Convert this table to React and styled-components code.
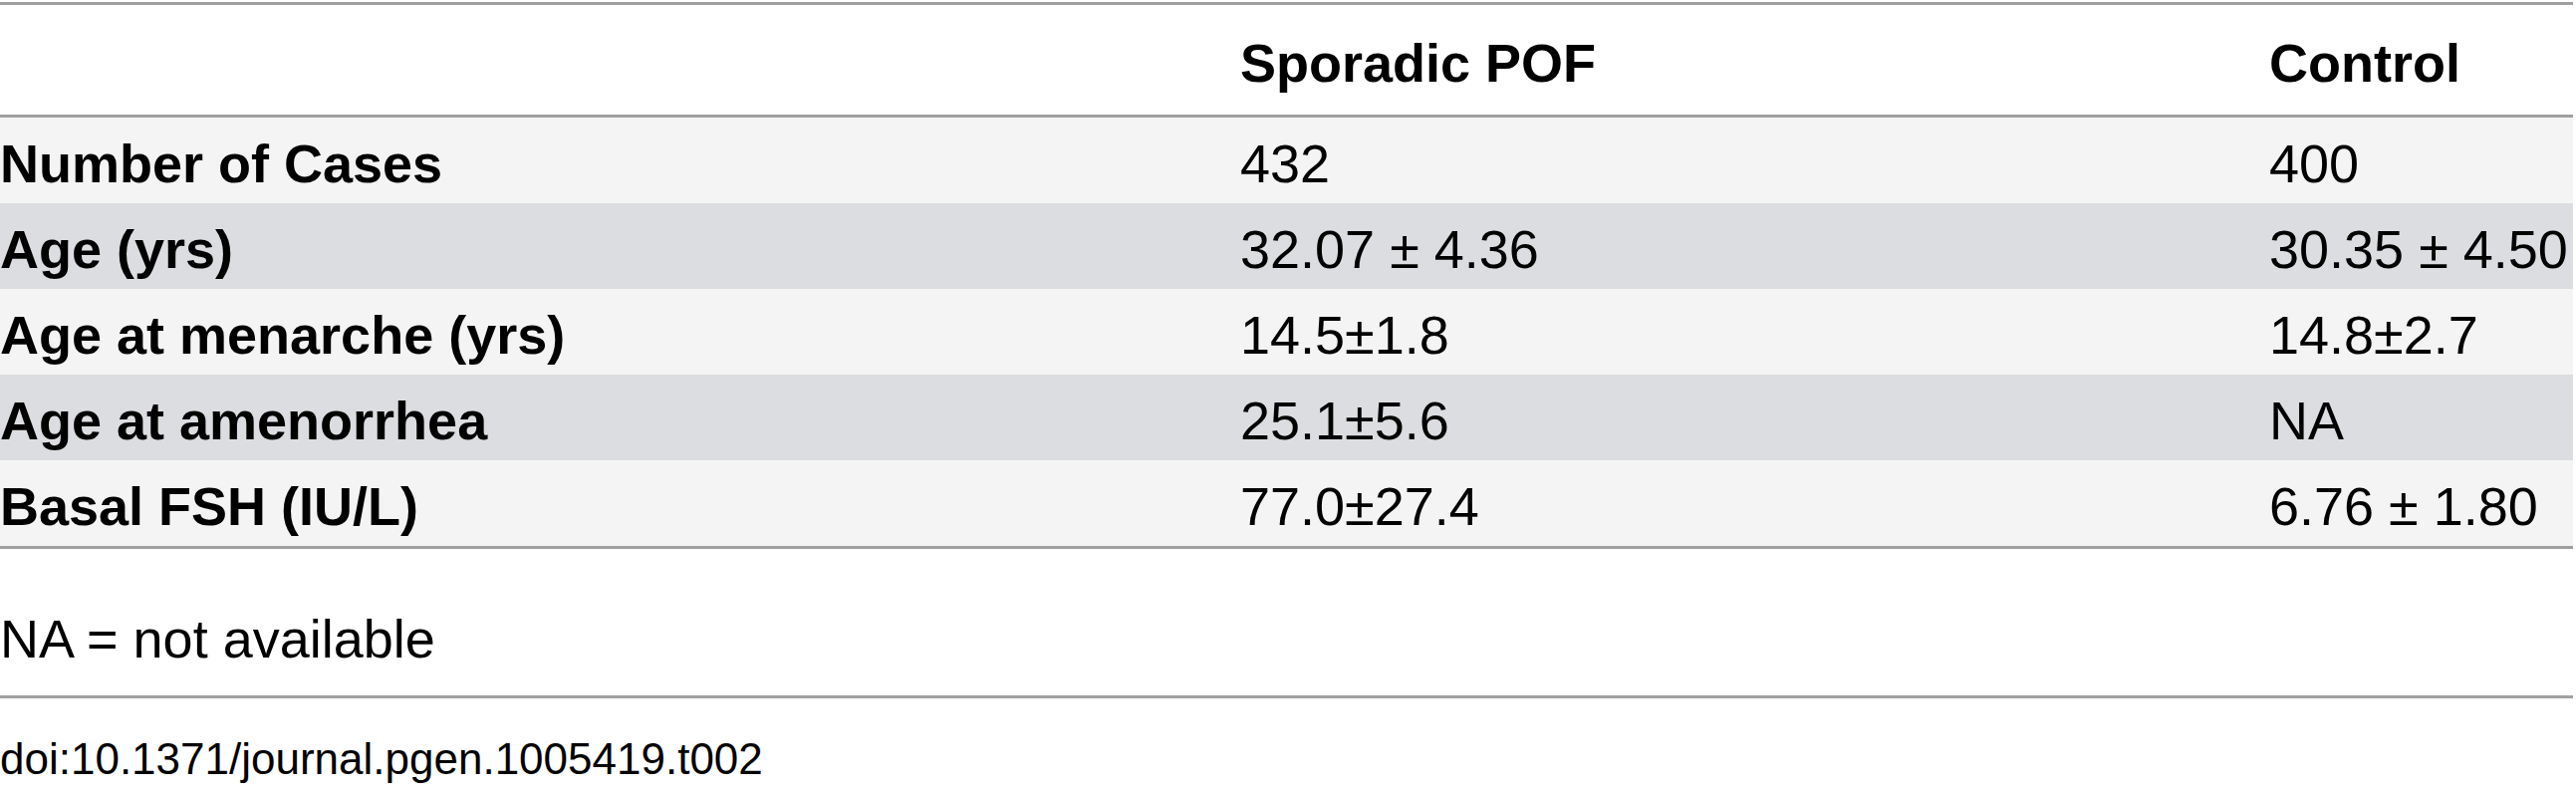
import React from "react";
import styled, { createGlobalStyle } from "styled-components";

const GlobalStyle = createGlobalStyle`
  html, body {
    margin: 0;
    padding: 0;
    background: #ffffff;
  }
  body {
    font-family: "Liberation Sans", Arial, sans-serif;
    color: #000;
  }
`;

const Page = styled.div`
  width: 2583px;
  padding-top: 2px;
`;

const Table = styled.div`
  border-top: 3px solid #a0a0a0;
  border-bottom: 3px solid #a0a0a0;
`;

// header row carries its own 3px rule, so it's 110 + 3
const Row = styled.div`
  display: grid;
  grid-template-columns: 1245px 1033px 1fr;
  box-sizing: border-box;
  height: ${(p) => (p.$header ? "113px" : "86px")};
  padding-top: ${(p) => (p.$header ? "28px" : "16px")};
  background: ${(p) =>
    p.$header ? "#ffffff" : p.$shade ? "#dcdde0" : "#f4f4f4"};
  border-bottom: ${(p) => (p.$header ? "3px solid #a0a0a0" : "none")};
`;

const Cell = styled.div`
  font-size: 54px;
  line-height: 60px;
  font-weight: ${(p) => (p.$bold ? 700 : 400)};
  white-space: nowrap;
`;

const Footnote = styled.div`
  font-size: 54px;
  line-height: 60px;
  padding: 60px 0 27px;
  border-bottom: 3px solid #a0a0a0;
`;

const Doi = styled.div`
  font-size: 44px;
  line-height: 50px;
  padding-top: 36px;
`;

const rows = [
  ["Number of Cases", "432", "400"],
  ["Age (yrs)", "32.07 ± 4.36", "30.35 ± 4.50"],
  ["Age at menarche (yrs)", "14.5±1.8", "14.8±2.7"],
  ["Age at amenorrhea", "25.1±5.6", "NA"],
  ["Basal FSH (IU/L)", "77.0±27.4", "6.76 ± 1.80"],
];

export default function App() {
  return (
    <Page>
      <GlobalStyle />
      <Table>
        <Row $header>
          <Cell $bold />
          <Cell $bold>Sporadic POF</Cell>
          <Cell $bold>Control</Cell>
        </Row>
        {rows.map(([label, pof, control], i) => (
          <Row key={label} $shade={i % 2 === 1}>
            <Cell $bold>{label}</Cell>
            <Cell>{pof}</Cell>
            <Cell>{control}</Cell>
          </Row>
        ))}
      </Table>
      <Footnote>NA = not available</Footnote>
      <Doi>doi:10.1371/journal.pgen.1005419.t002</Doi>
    </Page>
  );
}
